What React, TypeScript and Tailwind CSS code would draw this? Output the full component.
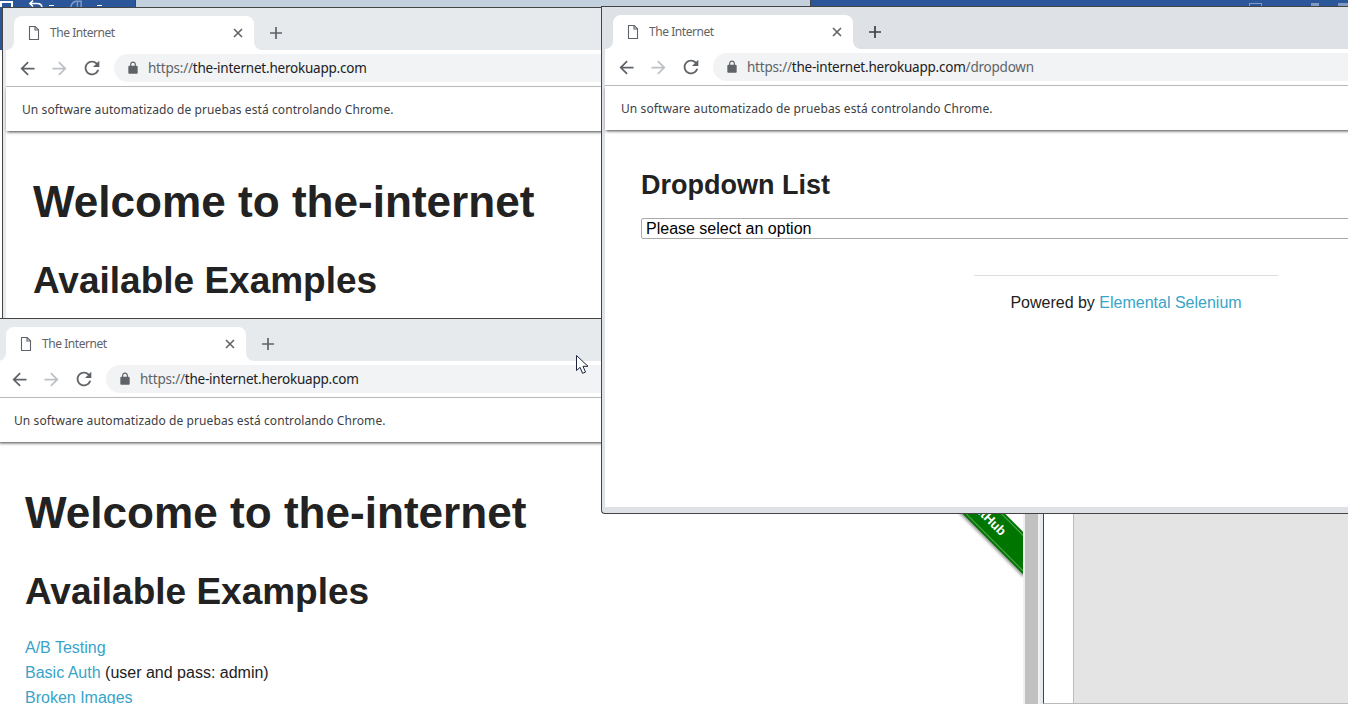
import React from "react";

const ui = "font-['Noto_Sans',sans-serif]";
const web = "font-['Liberation_Sans',Arial,sans-serif]";

function DocIcon() {
  return (
    <svg width="16" height="16" viewBox="0 0 16 16" fill="none" stroke="#5f6368" strokeWidth="1.1">
      <path d="M3.5 1.5h5.7l3.3 3.3v9.7h-9z" />
      <path d="M9 1.5v3.5h3.5" />
    </svg>
  );
}

function ToolIcon({ d, color, size = 24 }: { d: string; color: string; size?: number }) {
  return (
    <svg width={size} height={size} viewBox="0 0 24 24" fill={color}>
      <path d={d} />
    </svg>
  );
}

const backPath = "M20 11H7.83l5.59-5.59L12 4l-8 8 8 8 1.41-1.41L7.83 13H20v-2z";
const forwardPath = "M4 11h12.17l-5.59-5.59L12 4l8 8-8 8-1.41-1.41L16.17 13H4v-2z";
const reloadPath =
  "M17.65 6.35A7.958 7.958 0 0 0 12 4c-4.42 0-7.99 3.58-7.99 8s3.57 8 7.99 8c3.73 0 6.84-2.55 7.73-6h-2.08A5.99 5.99 0 0 1 12 18c-3.31 0-6-2.69-6-6s2.69-6 6-6c1.66 0 3.14.69 4.22 1.78L13 11h7V4l-2.35 2.35z";
const lockPath =
  "M18 8h-1V6c0-2.76-2.24-5-5-5S7 3.24 7 6v2H6c-1.1 0-2 .9-2 2v10c0 1.1.9 2 2 2h12c1.1 0 2-.9 2-2V10c0-1.1-.9-2-2-2zM9 6c0-1.66 1.34-3 3-3s3 1.34 3 3v2H9V6z";

function BrowserChrome({
  frame,
  plusColor,
  path,
}: {
  frame: string;
  plusColor: string;
  path?: string;
}) {
  return (
    <div className={ui}>
      {/* tab strip */}
      <div className="flex h-[42px] items-end pl-2">
        <div className="relative flex h-[34px] w-[240px] items-center rounded-t-lg bg-white">
          <span className="absolute -left-2 bottom-0 h-2 w-2 bg-white">
            <span className={`block h-2 w-2 rounded-br-lg ${frame}`} />
          </span>
          <span className="absolute -right-2 bottom-0 h-2 w-2 bg-white">
            <span className={`block h-2 w-2 rounded-bl-lg ${frame}`} />
          </span>
          <span className="ml-[12px]">
            <DocIcon />
          </span>
          <span className="ml-[8px] text-[12px] tracking-[-0.45px] text-[#5f6368]">The Internet</span>
          <svg className="ml-auto mr-[10px]" width="12" height="12" viewBox="0 0 12 12" stroke="#5f6368" strokeWidth="1.6">
            <path d="M2 2l8 8M10 2l-8 8" />
          </svg>
        </div>
        <svg className="mb-[10px] ml-[15px]" width="14" height="14" viewBox="0 0 14 14" stroke={plusColor} strokeWidth="1.7">
          <path d="M7 1v12M1 7h12" />
        </svg>
      </div>
      {/* toolbar */}
      <div className="flex h-[36px] items-center bg-white">
        <div className="ml-[11px] flex w-[97px] items-center gap-[11px]">
          <ToolIcon d={backPath} color="#5f6368" size={21} />
          <ToolIcon d={forwardPath} color="#bdc1c6" size={21} />
          <ToolIcon d={reloadPath} color="#5f6368" size={22} />
        </div>
        <div className="flex h-[28px] flex-1 items-center rounded-l-full bg-[#f1f3f4] pl-[12px]">
          <ToolIcon d={lockPath} color="#5f6368" size={14} />
          <span className="ml-[8px] text-[13.5px] tracking-[-0.22px] text-[#5f6368]">
            https://<span className="text-[#202124]">the-internet.herokuapp.com</span>
            {path}
          </span>
        </div>
      </div>
      {/* automation infobar */}
      <div className="relative z-10 flex h-[45px] items-center border-t border-[#b9b9b9] bg-white pl-[16px] pt-[2px] text-[12px] tracking-[0.09px] text-[#3c4043] shadow-[0_2px_3px_-1px_rgba(0,0,0,0.75)]">
        Un software automatizado de pruebas está controlando Chrome.
      </div>
    </div>
  );
}

function WelcomeHeadings() {
  return (
    <>
      <h1 className="text-[44.1px] font-bold leading-[56px] text-[#222]">Welcome to the-internet</h1>
      <h2 className="mt-[28px] text-[37px] font-bold leading-[45px] text-[#222]">Available Examples</h2>
    </>
  );
}

export default function App() {
  return (
    <div className="relative h-[704px] w-[1348px] overflow-hidden bg-white">
      {/* desktop app behind the windows */}
      <div className="flex h-[50px] items-start bg-[#2b579a]">
        <span className="mt-px h-[6px] w-[13px] border-2 border-b-0 border-white" />
        <svg className="ml-[16px]" width="14" height="8" viewBox="0 0 14 8" fill="none" stroke="#fff" strokeWidth="1.6">
          <path d="M1 3.5h7c3 0 5 1.5 5 4.5M4 0.5l-3 3 3 3" />
        </svg>
        <span className="ml-[6px] mt-[5px] h-px w-[5px] bg-white" />
        <svg className="ml-[16px]" width="13" height="8" viewBox="0 0 14 8" fill="none" stroke="#7f9ac4" strokeWidth="1.6">
          <path d="M1 8c0-3 2-6 5-7h6v7M8 1v6" />
        </svg>
        <span className="ml-[14px] mt-[5px] h-px w-[5px] bg-white" />
        <span className="ml-[33px] h-[8px] w-[676px] border-x border-[#444] bg-[#c3d0de]" />
        <span className="ml-[438px] mt-[3px] h-[4px] w-[13px] border border-[#7f9ac4]" />
        <span className="ml-[49px] mt-[3px] h-[4px] w-[8px] bg-[#7f9ac4]" />
        <span className="ml-[19px] mt-[3px] h-[4px] w-[10px] bg-[#7f9ac4]" />
      </div>

      {/* window behind, top left */}
      <div className="absolute isolate left-[2px] top-[7px] h-[320px] w-[620px] border-l border-t border-[#444] bg-[#e7eaed] pl-[3px]">
        <BrowserChrome frame="bg-[#e7eaed]" plusColor="#5f6368" />
        <div className={`h-[200px] bg-white pl-[27px] pt-[43px] ${web}`}>
          <WelcomeHeadings />
        </div>
      </div>

      {/* front left window, main page */}
      <div className="absolute isolate left-[-6px] top-[318px] h-[400px] w-[1050px] border-r border-t border-[#444] bg-[#e7eaed] pr-[3px]">
        <div className="pl-[4px]">
          <BrowserChrome frame="bg-[#e7eaed]" plusColor="#5f6368" />
        </div>
        <div className="flex h-[400px] pl-[6px]">
          <div className={`relative flex-1 overflow-hidden bg-white pl-[25px] pt-[43px] ${web}`}>
            <WelcomeHeadings />
            <ul className="mt-[21px] text-[16px] leading-[25px] text-[#222]">
              <li className="text-[#37a4c8]">A/B Testing</li>
              <li>
                <span className="text-[#37a4c8]">Basic Auth</span> (user and pass: admin)
              </li>
              <li className="text-[#37a4c8]">Broken Images</li>
            </ul>
            {/* fork me ribbon */}
            <div className="absolute right-[-41px] top-[37px] flex h-[30px] w-[200px] rotate-45 items-center justify-center bg-[#007500] pr-[5px] text-[13px] font-bold text-white shadow-[0_2px_3px_rgba(0,0,0,0.4)] outline-1 -outline-offset-3 outline-[#55a555]">
              Fork me on GitHub
            </div>
          </div>
          <div className="h-full w-[17px] bg-[#f1f1f1] px-[2px]">
            <div className="h-full bg-[#c1c1c1]" />
          </div>
        </div>
      </div>

      {/* lower right app panel */}
      <div className="absolute left-[1043px] top-[513px] flex h-[191px] w-[305px] border-b border-l border-t border-b-[#bbb] border-l-[#444] border-t-[#444] bg-[#e4e4e4]">
        <div className="h-full w-[30px] border-r border-[#bbb] bg-white" />
      </div>

      {/* front window, dropdown page */}
      <div className="absolute isolate left-[601px] top-[6px] h-[508px] w-[760px] rounded-bl-sm border-b border-l border-t border-[#444] bg-[#dee1e6] pb-[3px] pl-[3px]">
        <BrowserChrome frame="bg-[#dee1e6]" plusColor="#3c4043" path="/dropdown" />
        <div className={`h-[377px] bg-white pl-[36px] pt-[38px] ${web}`}>
          <h3 className="text-[27px] font-bold leading-[34px] text-[#222]">Dropdown List</h3>
          <div className="mt-[16px] flex h-[21px] items-center rounded-[2px] border border-[#a9a9a9] pl-[4px] text-[16px] text-black">
            Please select an option
          </div>
          <div className="ml-[333px] mt-[36px] w-[304px] border-t border-[#ddd] pt-[17px] text-center text-[16px] leading-[20px] text-[#222]">
            Powered by <span className="text-[#37a4c8]">Elemental Selenium</span>
          </div>
        </div>
      </div>

      {/* mouse pointer */}
      <svg className="absolute left-[576px] top-[355px]" width="14" height="21" viewBox="0 0 14 21">
        <path d="M0.5 0.5v15l3.6-3.2 2.4 6 3-1.2-2.5-5.8h5z" fill="#fff" stroke="#1d2440" strokeWidth="1" />
      </svg>
    </div>
  );
}
